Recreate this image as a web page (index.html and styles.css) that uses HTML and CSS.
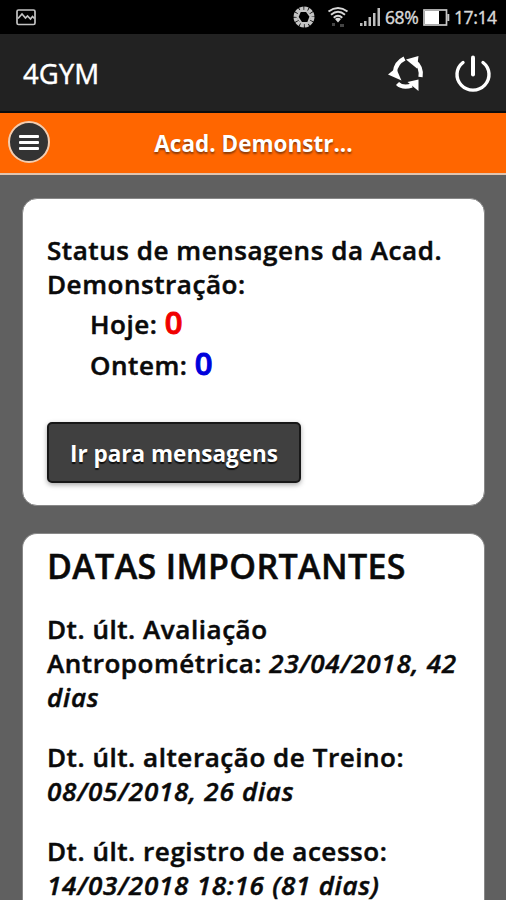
FILE: index.html
```html
<!DOCTYPE html>
<html lang="pt-BR">

<head>
  <meta charset="utf-8">
  <title>4GYM</title>
  <link rel="stylesheet" href="styles.css">
</head>

<body>
  <div class="statusbar">
    <svg class="picture" width="20" height="17" viewBox="0 0 20 17" fill="none" stroke="#c4c4c4" stroke-width="1.7">
      <rect x="1" y="1" width="18" height="14.5" rx="1.5" />
      <path d="M2 9.5L6 5l3.500 4 2-2 3 3 2-2.500 2 2" />
    </svg>
    <div class="indicators">
      <svg class="sync" width="24" height="24" viewBox="0 0 24 24" fill="none" stroke="#c4c4c4">
        <circle cx="12" cy="12" r="8.500" stroke-width="4" stroke-dasharray="3.700 0.750" />
        <path d="M8 6h6.500l4 5.500-2.500 6.500H9.500l-4-6z" stroke-width="2" />
      </svg>
      <svg class="wifi" width="22" height="22" viewBox="0 0 22 22" fill="none" stroke="#d8d8d8" stroke-width="1.900">
        <path d="M1.500 5.500Q11-1.500 20.500 5.500" />
        <path d="M4 8.700Q11 3 18 8.700" />
        <path d="M6.700 11.700Q11 8 15.300 11.700" />
        <path d="M8 13L11 16.500l3-3.500Q11 10.500 8 13z" fill="#d8d8d8" stroke="none" />
        <path d="M5 18.500h3M13 19.500h4" stroke="#444" stroke-width="3" />
      </svg>
      <svg class="signal" width="21" height="19" viewBox="0 0 21 19" fill="#bdbdbd">
        <rect x="0" y="15" width="2.500" height="3" />
        <rect x="4" y="13" width="2.500" height="5" />
        <rect x="8.500" y="9" width="2.500" height="9" />
        <rect x="13" y="5" width="2.500" height="13" />
        <rect x="17.500" y="0" width="2.500" height="18" />
      </svg>
      <span class="percent">68%</span>
      <svg class="battery" width="27" height="17" viewBox="0 0 27 17">
        <rect x="1" y="1" width="22.500" height="15" fill="none" stroke="#c8c8c8" stroke-width="1.700" />
        <rect x="2" y="2" width="14" height="13" fill="#fff" />
        <rect x="24.300" y="5" width="2" height="7" fill="#c8c8c8" />
      </svg>
      <span class="clock">17:14</span>
    </div>
  </div>

  <div class="appbar">
    <h1>4GYM</h1>
    <div class="actions">
      <svg class="refresh" width="38" height="38" viewBox="0 0 38 38" fill="none" stroke="#fff" stroke-width="4.300">
        <path d="M8 18C8.500 12 11.500 7.500 17.500 4.500" />
        <path d="M27 7C32.500 11 34.500 17 33.500 23" />
        <path d="M10.500 29.500C14 33 19 33.500 25 31.500" />
        <g fill="#fff" stroke="none">
          <path d="M1 20.500L9 14l5.500 12.500z" />
          <path d="M19 5.500L31.500 2 30 14.500z" />
          <path d="M20.500 28L31.500 25.500 31.500 37z" />
        </g>
      </svg>
      <svg class="power" width="38" height="38" viewBox="0 0 38 38" fill="none" stroke="#fff" stroke-width="3.400" stroke-linecap="round">
        <path d="M9 8.500A16 15.500 0 1 0 29 8.500" />
        <path d="M19 3.500v17" stroke-width="4" />
      </svg>
    </div>
  </div>

  <div class="titlebar">
    <div class="menu">
      <span></span>
      <span></span>
      <span></span>
    </div>
    <h2>Acad. Demonstr...</h2>
  </div>

  <div class="content">
    <div class="card messages">
      <p>Status de mensagens da Acad. Demonstração:</p>
      <div class="count">Hoje: <b class="today">0</b></div>
      <div class="count">Ontem: <b class="yesterday">0</b></div>
      <a class="button">Ir para mensagens</a>
    </div>

    <div class="card dates">
      <h3>DATAS IMPORTANTES</h3>
      <p>Dt. últ. Avaliação Antropométrica: <i>23/04/2018, 42 dias</i></p>
      <p>Dt. últ. alteração de Treino: <i>08/05/2018, 26 dias</i></p>
      <p>Dt. últ. registro de acesso: <i>14/03/2018 18:16 (81 dias)</i></p>
    </div>
  </div>
</body>

</html>
```

FILE: styles.css
```css
* {
  box-sizing: border-box;
}

body {
  display: flex;
  flex-direction: column;
  margin: 0;
  height: 900px;
  overflow: hidden;
  background-color: #606060;
  font-family: "Open Sans", sans-serif;
  color: #0a0a0a;
}

h1, h2, h3, p {
  margin: 0;
}

.statusbar {
  display: flex;
  flex-shrink: 0;
  justify-content: space-between;
  height: 34px;
  padding: 0 10px 0 16px;
  background-color: #000;
}

.picture {
  margin-top: 9px;
}

.indicators {
  display: flex;
  align-items: center;
  color: #d8d8d8;
  font-family: "Noto Sans", sans-serif;
  font-size: 17.5px;
  -webkit-text-stroke: 0.3px #d8d8d8;
}

.wifi {
  margin-left: 11px;
}

.signal {
  margin-left: 11px;
}

.percent {
  width: 34px;
  margin-left: 4px;
  letter-spacing: -0.4px;
}

.battery {
  margin-left: 4px;
}

.clock {
  width: 42px;
  margin-left: 4px;
  letter-spacing: -0.4px;
}

.appbar {
  display: flex;
  flex-shrink: 0;
  justify-content: space-between;
  align-items: center;
  height: 79px;
  padding: 0 14px 0 23px;
  background-color: #222;
  border-bottom: 2px solid #0c0c0c;
}

.appbar h1 {
  padding-top: 1px;
  color: #fff;
  font-family: "Noto Sans", sans-serif;
  font-size: 27.5px;
  font-weight: 400;
  -webkit-text-stroke: 0.3px #fff;
}

.actions {
  display: flex;
  gap: 29px;
}

.titlebar {
  display: flex;
  flex-shrink: 0;
  align-items: center;
  height: 62px;
  padding: 0 8px 2px;
  background-color: #ff6600;
  border-bottom: 2px solid #e0c4b0;
}

.titlebar h2 {
  flex: 1;
  padding: 2px 41px 0 0;
  color: #fff;
  font-size: 22.5px;
  font-weight: 700;
  text-align: center;
  text-shadow: 0 2px 2px #8a3a08;
}

.menu {
  display: flex;
  flex-direction: column;
  align-items: center;
  justify-content: center;
  gap: 3px;
  width: 42px;
  height: 42px;
  border: 2px solid #f3cdb0;
  border-radius: 50%;
  background-color: #333;
}

.menu span {
  width: 20px;
  height: 3px;
  border-radius: 1px;
  background-color: #fff;
}

.content {
  flex: 1;
  display: flex;
  flex-direction: column;
  gap: 27px;
  min-height: 0;
  padding: 23px 21px 0 22px;
}

.card {
  padding: 0 15px 0 24px;
  border: 1px solid #888;
  border-radius: 15px;
  background-color: #fff;
  font-size: 26px;
  font-weight: 600;
  letter-spacing: 0.55px;
  line-height: 34px;
  -webkit-text-stroke: 0.5px;
}

.messages {
  flex-shrink: 0;
  height: 308px;
  padding-top: 34px;
}

.count {
  height: 41px;
  padding-left: 43px;
  line-height: 47px;
}

.count b {
  font-size: 31px;
  font-weight: 600;
  line-height: 30px;
  -webkit-text-stroke: 1px;
}

.today {
  color: #f00000;
}

.yesterday {
  color: #0000dc;
}

.button {
  display: block;
  width: 254px;
  height: 61px;
  margin-top: 39px;
  border: 2px solid #181818;
  border-radius: 5px;
  background-color: #404040;
  box-shadow: 0 2px 5px #aaa;
  color: #fff;
  font-size: 22.5px;
  font-weight: 700;
  letter-spacing: 0;
  line-height: 60px;
  text-align: center;
  text-shadow: 0 2px 1px #111;
  -webkit-text-stroke: 0;
}

.dates {
  flex: 1;
  min-height: 0;
  padding-top: 11px;
  border-bottom: 0;
  border-radius: 15px 15px 0 0;
}

.dates h3 {
  margin-bottom: 25px;
  font-size: 34px;
  font-weight: 600;
  letter-spacing: 0.35px;
  line-height: 42px;
}

.dates p {
  margin-bottom: 26px;
}

.dates p:last-child {
  margin-bottom: 0;
}

.dates i {
  letter-spacing: 0.75px;
}
```
